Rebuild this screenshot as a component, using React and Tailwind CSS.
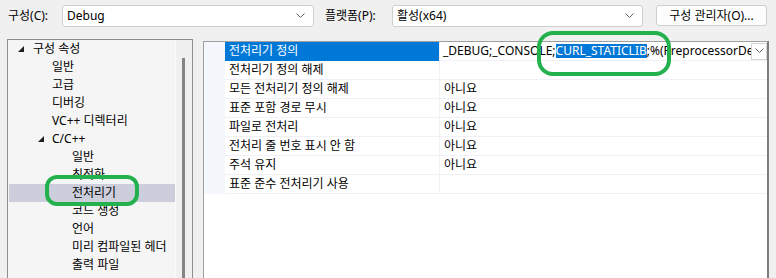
import React from "react";

const FONT = { fontFamily: '"Noto Sans", "Noto Sans CJK KR", sans-serif' };

// 트리 항목: level 0..2, expanded 표시 여부
const treeItems = [
  { label: "구성 속성", level: 0, open: true },
  { label: "일반", level: 1 },
  { label: "고급", level: 1 },
  { label: "디버깅", level: 1 },
  { label: "VC++ 디렉터리", level: 1 },
  { label: "C/C++", level: 1, open: true },
  { label: "일반", level: 2 },
  { label: "최적화", level: 2 },
  { label: "전처리기", level: 2, selected: true },
  { label: "코드 생성", level: 2 },
  { label: "언어", level: 2 },
  { label: "미리 컴파일된 헤더", level: 2 },
  { label: "출력 파일", level: 2 },
];

const rows = [
  { name: "전처리기 정의", value: "define", selected: true },
  { name: "전처리기 정의 해제", value: "" },
  { name: "모든 전처리기 정의 해제", value: "아니요" },
  { name: "표준 포함 경로 무시", value: "아니요" },
  { name: "파일로 전처리", value: "아니요" },
  { name: "전처리 줄 번호 표시 안 함", value: "아니요" },
  { name: "주석 유지", value: "아니요" },
  { name: "표준 준수 전처리기 사용", value: "" },
];

function Chevron({ className = "" }) {
  return (
    <svg width="9" height="6" viewBox="0 0 9 6" className={className}>
      <polyline points="0.5,0.5 4.5,4.5 8.5,0.5" fill="none" stroke="#606060" strokeWidth="1" />
    </svg>
  );
}

function Expander() {
  return (
    <svg width="6" height="6" viewBox="0 0 6 6">
      <polygon points="6,0 6,6 0,6" fill="#1e1e1e" />
    </svg>
  );
}

function Combo({ text, width }) {
  return (
    <div
      className="h-[22px] bg-white border border-[#cfcfcf] rounded-[3px] flex items-center justify-between pl-[4px] pr-[8px] text-[12px] text-black"
      style={{ width }}
    >
      <span>{text}</span>
      <Chevron />
    </div>
  );
}

function TreeRow({ item }) {
  const textLeft = item.level === 0 ? 25 : item.level === 1 ? 44 : 64;
  return (
    <div
      className={
        "h-[18px] flex items-center relative text-[12px] text-black whitespace-nowrap " +
        (item.selected ? "bg-[#cccedb] ml-[1px]" : "")
      }
    >
      {item.open && (
        <span
          className="absolute top-[6px]"
          style={{ left: item.level === 0 ? 10 : 30 }}
        >
          <Expander />
        </span>
      )}
      <span style={{ paddingLeft: item.selected ? textLeft - 1 : textLeft }}>{item.label}</span>
    </div>
  );
}

function ValueCell({ row }) {
  if (row.value === "define") {
    return (
      <div className="flex-1 flex items-center min-w-0">
        <div className="flex-1 overflow-hidden whitespace-nowrap pl-[3px] leading-[14px]">
          <span>_DEBUG;_CONSOLE;</span>
          <span className="bg-[#0078d7] text-white">CURL_STATICLIB</span>
          <span>;%(PreprocessorDefinitions)</span>
        </div>
        <div className="w-[16px] h-[17px] bg-white border border-[#d4d4d4] flex items-center justify-center shrink-0">
          <Chevron />
        </div>
      </div>
    );
  }
  return <div className="flex-1 pl-[4px] whitespace-nowrap">{row.value}</div>;
}

export default function App() {
  return (
    <div
      className="w-[776px] h-[278px] bg-[#f0f0f0] relative overflow-hidden text-black"
      style={FONT}
    >
      {/* 상단 구성 바 */}
      <div className="h-[39px] flex items-start pt-[5px] pl-[8px] text-[12px]">
        <div className="w-[54px] h-[22px] flex items-center">구성(C):</div>
        <Combo text="Debug" width={252} />
        <div className="w-[67px] ml-[11px] h-[22px] flex items-center">플랫폼(P):</div>
        <Combo text="활성(x64)" width={251} />
        <button className="ml-[13px] w-[111px] h-[21px] bg-[#fdfdfd] border border-[#cfcfcf] rounded-[3px] text-[12px] flex items-center justify-center">
          구성 관리자(O)...
        </button>
      </div>

      <div className="flex h-[239px]">
        {/* 트리 패널 */}
        <div className="ml-[7px] w-[186px] h-full border-l border-t border-r border-[#8e8e8e] bg-[#f5f5f5] flex">
          <div className="flex-1 pt-[0px]">
            {treeItems.map((item, i) => (
              <TreeRow key={i} item={item} />
            ))}
          </div>
          <div className="w-[17px] bg-[#f0f0f0] border-l border-[#fafafa] relative">
            <div className="absolute left-[6px] top-[18px] bottom-0 w-[3px] bg-[#858585]" />
          </div>
        </div>

        {/* 속성 그리드 */}
        <div className="ml-[10px] mt-[2px] w-[566px] h-full border-l border-t border-[#a0a0a0] border-r-2 border-r-[#7d7d7d] bg-white">
          {rows.map((row, i) => (
            <div key={i} className="h-[19px] flex text-[12px]">
              <div className="w-[21px] bg-[#f4f7fb]" />
              <div
                className={
                  "w-[214px] flex items-center pl-[4px] border-b whitespace-nowrap " +
                  (row.selected
                    ? "bg-[#0078d7] text-white border-[#0078d7]"
                    : "border-[#f0f0f6]")
                }
              >
                {row.name}
              </div>
              <div className="flex-1 flex items-center border-l border-b border-[#f0f0f6] min-w-0">
                <ValueCell row={row} />
              </div>
            </div>
          ))}
        </div>
      </div>

      {/* 녹색 표시 */}
      <svg className="absolute left-0 top-0 pointer-events-none" width="776" height="278">
        <rect x="47" y="177" width="90" height="27" rx="10" fill="none" stroke="#22b14c" strokeWidth="4" />
        <rect x="539" y="33" width="130" height="41" rx="14" fill="none" stroke="#22b14c" strokeWidth="4" />
      </svg>
    </div>
  );
}
